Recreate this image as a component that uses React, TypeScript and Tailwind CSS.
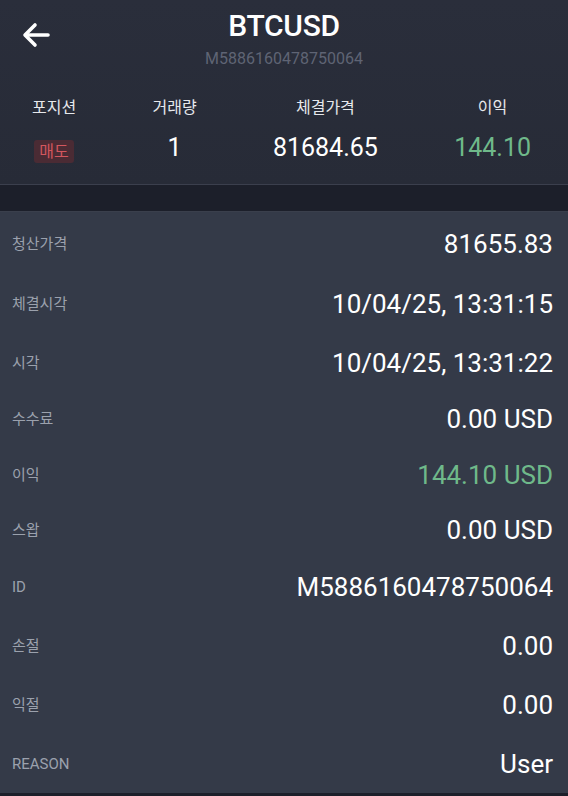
import React from "react";

const rows: { label: string; value: string; green?: boolean; h: string }[] = [
  { label: "청산가격", value: "81655.83", h: "h-[60px]" },
  { label: "체결시각", value: "10/04/25, 13:31:15", h: "h-[60px]" },
  { label: "시각", value: "10/04/25, 13:31:22", h: "h-[57px]" },
  { label: "수수료", value: "0.00 USD", h: "h-[56px]" },
  { label: "이익", value: "144.10 USD", green: true, h: "h-[55px]" },
  { label: "스왑", value: "0.00 USD", h: "h-[55px]" },
  { label: "ID", value: "M5886160478750064", h: "h-[59px]" },
  { label: "손절", value: "0.00", h: "h-[59px]" },
  { label: "익절", value: "0.00", h: "h-[59px]" },
  { label: "REASON", value: "User", h: "h-[59px]" },
];

export default function App() {
  return (
    <div
      className="w-[568px] h-[796px] overflow-hidden bg-[#343a48] flex flex-col"
      style={{ fontFamily: "Roboto, 'Noto Sans CJK KR', sans-serif" }}
    >
      <div className="bg-gradient-to-b from-[#2a2e3b] to-[#272b37] h-[185px] flex flex-col border-b border-[#3b3f4d]">
        <div className="relative flex flex-col items-center pt-[6px]">
          <button className="absolute left-[22px] top-[22px] text-white">
            <svg width="29" height="26" viewBox="0 0 29 26" fill="none" stroke="white" strokeWidth="3.6" strokeLinecap="round" strokeLinejoin="round">
              <path d="M26 13H4" />
              <path d="M13 3L3 13L13 23" />
            </svg>
          </button>
          <div className="text-white text-[30px] leading-[40px] font-medium tracking-[-0.3px]">BTCUSD</div>
          <div className="text-[#5f6474] text-[16px] leading-[20px] mt-[3px]">M5886160478750064</div>
        </div>
        <div className="flex justify-between pl-[32px] pr-[37px] mt-[29px]">
          <div className="flex flex-col items-center">
            <div className="text-[#e6e8ec] text-[16px] leading-[20px]">포지션</div>
            <div className="mt-[22px] bg-[#4a2b34] text-[#d2575e] text-[16px] leading-[23px] px-[5px] rounded-[3px]">매도</div>
          </div>
          <div className="flex flex-col items-center">
            <div className="text-[#e6e8ec] text-[16px] leading-[20px]">거래량</div>
            <div className="mt-[14px] text-white text-[25px] leading-[32px]">1</div>
          </div>
          <div className="flex flex-col items-center">
            <div className="text-[#e6e8ec] text-[16px] leading-[20px]">체결가격</div>
            <div className="mt-[14px] text-white text-[25px] leading-[32px]">81684.65</div>
          </div>
          <div className="flex flex-col items-center">
            <div className="text-[#e6e8ec] text-[16px] leading-[20px]">이익</div>
            <div className="mt-[14px] text-[#6fb98a] text-[25px] leading-[32px]">144.10</div>
          </div>
        </div>
      </div>
      <div className="h-[27px] bg-[#1c1f2a] border-b border-[#3a3f4c]" />
      <div className="flex flex-col pt-[2px]">
        {rows.map((r) => (
          <div key={r.label} className={`${r.h} flex items-center justify-between pl-[12px] pr-[15px]`}>
            <div className="text-[#9ba1ad] text-[15px] leading-[20px]">{r.label}</div>
            <div className={`${r.green ? "text-[#6fb98a]" : "text-white"} text-[26px] leading-[32px]`}>{r.value}</div>
          </div>
        ))}
      </div>
      <div className="flex-1" />
      <div className="h-[3px] bg-[#1c1f2a]" />
    </div>
  );
}
